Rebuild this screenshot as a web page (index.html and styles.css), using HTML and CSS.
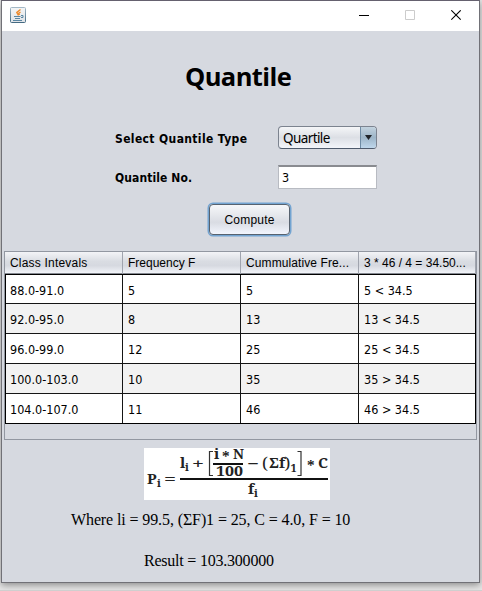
FILE: index.html
```html
<!DOCTYPE html>
<html lang="en">
<head>
<meta charset="utf-8">
<title>Quantile</title>
<link rel="stylesheet" href="styles.css">
</head>
<body>
<div class="window">
  <header class="titlebar">
    <svg class="java" width="16" height="16" viewBox="0 0 16 16">
      <defs><linearGradient id="jb" x1="0" y1="0" x2="0" y2="1"><stop offset="0" stop-color="#a3b8c6"/><stop offset="1" stop-color="#446a82"/></linearGradient>
      <linearGradient id="jf" x1="0" y1="0" x2="0" y2="1"><stop offset="0" stop-color="#f4f5f6"/><stop offset="1" stop-color="#dfe3e7"/></linearGradient></defs>
      <rect x=".5" y=".5" width="15" height="15" rx="1" fill="url(#jf)" stroke="url(#jb)"/>
      <path d="M10.500 2.500L6.800 5.500L8.500 8.500M10.500 5L8.800 6.200L9.500 8" fill="none" stroke="#ee8a2b" stroke-width="1.400"/>
      <path d="M4 9.500H10.500M5 11.500H10M3 13.500H12M11 8.500H13V10.500H11" fill="none" stroke="#5b87a3"/>
    </svg>
    <div class="controls">
      <svg width="11" height="11" viewBox="0 0 11 11"><path d="M0 5.500H10" stroke="#000"/></svg>
      <svg width="11" height="11" viewBox="0 0 11 11"><path d="M.5 .5H9.500V9.500H.5Z" fill="none" stroke="#ccc"/></svg>
      <svg width="11" height="11" viewBox="0 0 11 11"><path d="M.3 .3L9.700 9.700M9.700 .3L.3 9.700" stroke="#000" stroke-width="1.100"/></svg>
    </div>
  </header>
  <main class="content">
    <h1 class="heading">Quantile</h1>
    <div class="form">
      <label class="label type">Select Quantile Type</label>
      <div class="combo"><span class="value">Quartile</span><span class="arrow"><svg width="7" height="5" viewBox="0 0 7 5"><path d="M0 0H7L3.500 5Z" fill="#20242a"/></svg></span></div>
      <label class="label number">Quantile No.</label>
      <div class="field">3</div>
    </div>
    <button class="compute">Compute</button>
    <div class="pane">
      <div class="row head"><span class="intervals">Class Intevals</span><span>Frequency F</span><span class="cumulative">Cummulative Fre...</span><span>3 * 46 / 4 = 34.50...</span></div>
      <div class="body">
        <div class="row"><span>88.0-91.0</span><span>5</span><span>5</span><span>5 &lt; 34.5</span></div>
        <div class="row"><span>92.0-95.0</span><span>8</span><span>13</span><span>13 &lt; 34.5</span></div>
        <div class="row"><span>96.0-99.0</span><span>12</span><span>25</span><span>25 &lt; 34.5</span></div>
        <div class="row"><span>100.0-103.0</span><span>10</span><span>35</span><span>35 &gt; 34.5</span></div>
        <div class="row"><span>104.0-107.0</span><span>11</span><span>46</span><span>46 &gt; 34.5</span></div>
      </div>
    </div>
    <svg class="formula" width="186" height="52" viewBox="0 0 186 52">
      <rect width="186" height="52" fill="#fff"/>
      <g class="math">
        <text x="3" y="36">P</text><text class="sub" x="13" y="39">i</text>
        <text x="20" y="36" textLength="12" lengthAdjust="spacingAndGlyphs">=</text>
        <text x="36" y="20">l</text><text class="sub" x="41" y="23">i</text>
        <text x="48" y="21" textLength="12" lengthAdjust="spacingAndGlyphs">+</text>
        <text x="70" y="11">i</text><text x="78" y="14">*</text><text x="89" y="11" textLength="11" lengthAdjust="spacingAndGlyphs">N</text>
        <text x="72" y="28" textLength="27" lengthAdjust="spacingAndGlyphs">100</text>
        <text x="103" y="21" textLength="12" lengthAdjust="spacingAndGlyphs">−</text>
        <text class="paren" x="118" y="21">(</text><text x="125" y="20" textLength="16" lengthAdjust="spacingAndGlyphs">Σf</text><text class="paren" x="140.500" y="21">)</text>
        <text class="sub" x="146.500" y="24">1</text>
        <text x="163" y="23">*</text><text x="174" y="20" textLength="10" lengthAdjust="spacingAndGlyphs">C</text>
        <text x="104" y="46">f</text><text class="sub" x="110" y="49">i</text>
      </g>
      <path d="M36 31H184M69 16H99" stroke="#111" stroke-width="2"/>
      <path d="M69 3.500H65.500V27.500H69M153.500 3.500H157V27.500H153.500" fill="none" stroke="#333" stroke-width="1.200"/>
    </svg>
    <p class="where">Where li = 99.5, (ΣF)1 = 25, C = 4.0, F = 10</p>
    <p class="result">Result = 103.300000</p>
  </main>
</div>
</body>
</html>
```
FILE: styles.css
```css
* { box-sizing: border-box; }
body { margin: 0; width: 482px; height: 591px; overflow: hidden; background: #e6e6e6; border-bottom: 1px solid #cfcfcf; }
.window { width: 479px; height: 583px; margin-left: 1px; border: 1px solid #717177; border-top-color: #65616f; background: #d6d9e0; box-shadow: 0 2px 7px rgba(0,0,0,.4); }
.titlebar { height: 30px; background: #fff; display: flex; justify-content: space-between; padding: 6px 17px 0 8px; }
.controls { display: flex; gap: 35px; padding-top: 3px; }
.content { display: flex; flex-direction: column; align-items: flex-start; color: #000; }
.heading { margin: 28px 0 0 183px; height: 34px; font: 700 25.500px/34px "Open Sans", sans-serif; letter-spacing: -.6px; white-space: nowrap; }
.form { margin: 33px 0 0 113px; display: grid; grid-template-columns: 163px 99px; grid-template-rows: 23px 24px; row-gap: 16px; align-items: center; }
.label { font: 700 12px/16px "DejaVu Sans Condensed", "DejaVu Sans", sans-serif; font-stretch: condensed; white-space: nowrap; padding-top: 2px; }
.type { letter-spacing: .37px; }
.number { letter-spacing: .1px; }
.combo { height: 23px; display: flex; border: 1px solid #7c838f; border-bottom-color: #4e5a6c; border-radius: 4px; background: linear-gradient(#f5f6f8, #dcdfe5 50%, #f3f5fa); overflow: hidden; }
.value { flex: 1; padding-left: 4px; font: 13.500px/22px "Noto Sans", sans-serif; letter-spacing: -.6px; }
.arrow { width: 16px; border-left: 1px solid #6e8ba4; background: linear-gradient(#c3d3df, #9db5c8 50%, #bfd7ec); display: flex; align-items: center; justify-content: center; }
.field { height: 24px; border: 1px solid #b8bbc2; border-top: 2px solid #898b90; background: #fff; padding-left: 3px; font: 12.500px/22px "DejaVu Sans Condensed", "DejaVu Sans", sans-serif; font-stretch: condensed; }
.compute { margin: 15px 0 0 207px; width: 81px; height: 31px; padding: 0; border: 1px solid #57626f; border-radius: 4px; box-shadow: 0 0 0 1.500px #73a4d1; background: linear-gradient(#f6f7f9, #d9dce3 60%, #f2f5fd); font: 12px/28px "Liberation Sans", sans-serif; letter-spacing: .2px; color: #000; }
.pane { margin: 16px 0 0 2px; width: 473px; height: 189px; border: 1px solid #9297a1; }
.row { display: grid; grid-template-columns: 117px 118px 118px 1fr; }
.row.head { grid-template-columns: 118px 118px 118px 1fr; }
.head { height: 22px; background: linear-gradient(#f3f4f7, #d9dce2 45%, #d6d9e0 65%, #f1f3f8); border-bottom: 1px solid #83878f; font: 12px/22px "Liberation Sans", sans-serif; }
.head span { padding-left: 5px; border-right: 1px solid #a0a4ae; white-space: nowrap; }
.head .intervals { letter-spacing: .2px; }
.head .cumulative { letter-spacing: .1px; }
.body { width: 471px; border: 1px solid #000; font: 12.500px/31px "DejaVu Sans Condensed", "DejaVu Sans", sans-serif; font-stretch: condensed; }
.body .row { height: 30px; border-bottom: 1px solid #151515; background: #fff; }
.body .row:first-child { height: 29px; }
.body .row:last-child { height: 29px; border-bottom: 0; }
.body .row:nth-child(even) { background: #f2f2f2; }
.body span { padding-left: 5px; border-right: 1px solid #151515; white-space: nowrap; height: 29px; }
.body .row:first-child span { height: 28px; }
.body span:first-child { padding-left: 4px; }
.body span:last-child { border: 0; }
.formula { display: block; margin: 8px 0 0 142px; }
.math { font: 700 15px "Noto Serif", "Liberation Serif", serif; fill: #222; }
.math .sub { font-size: 11px; }
.math .paren { font-weight: 400; font-size: 17px; }
.where, .result { margin: 0; font: 16px/20px "Liberation Serif", serif; white-space: nowrap; }
.where { margin: 10px 0 0 69px; letter-spacing: -.11px; }
.result { margin: 21px 0 0 142px; letter-spacing: -.22px; }
```
